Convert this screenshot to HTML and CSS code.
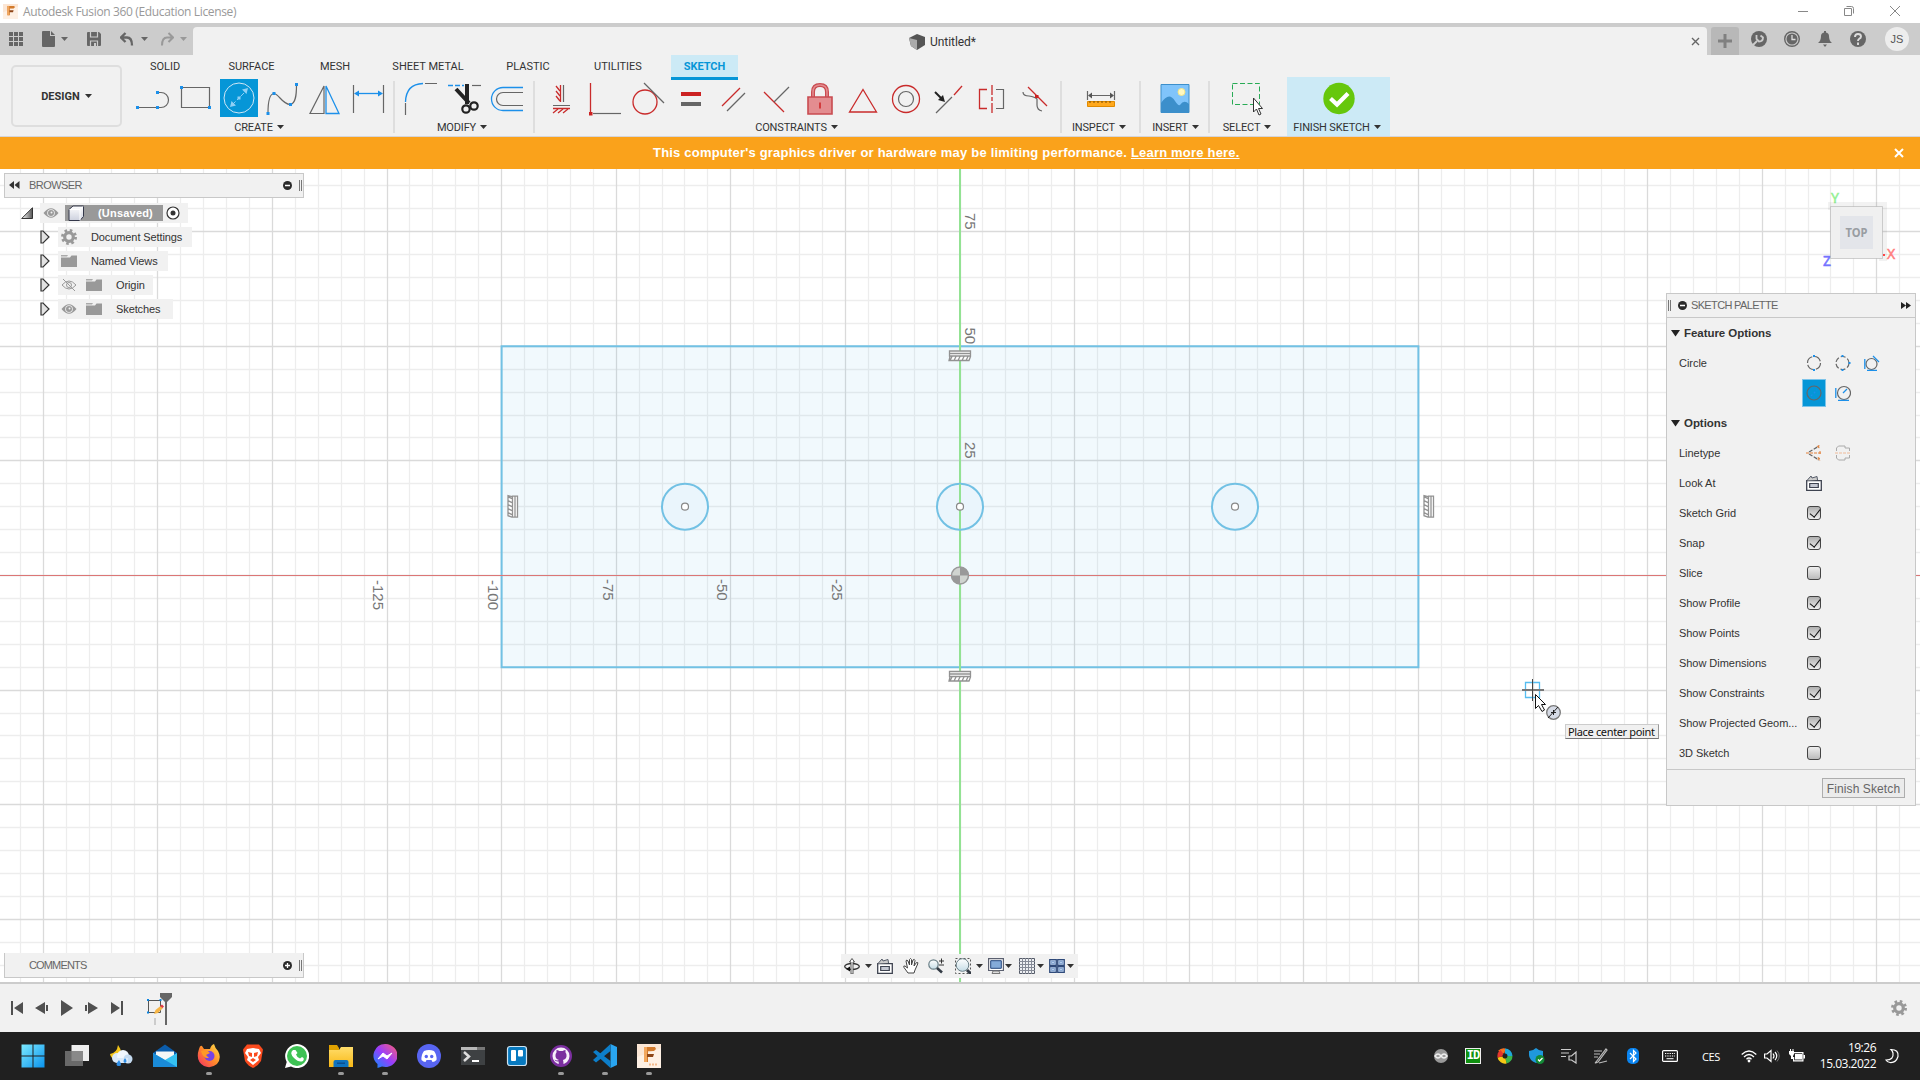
FILE: index.html
```html
<!DOCTYPE html>
<html lang="en">
<head>
<meta charset="utf-8">
<title>Autodesk Fusion 360</title>
<link rel="stylesheet" href="styles.css">
</head>
<body>
<svg width="0" height="0" class="defs">
  <defs>
    <linearGradient id="boxg" x1="0" y1="0" x2="0" y2="1"><stop offset="0" stop-color="#fff"/><stop offset="1" stop-color="#cdd1de"/></linearGradient>
    <linearGradient id="tri" x1="0" y1="0" x2="1" y2="0"><stop offset="0" stop-color="#fff"/><stop offset="1" stop-color="#555"/></linearGradient>
    <linearGradient id="win" x1="0" y1="0" x2="1" y2="1"><stop offset="0" stop-color="#7ceaff"/><stop offset="1" stop-color="#0a93ee"/></linearGradient>
    <linearGradient id="fold" x1="0" y1="0" x2="0" y2="1"><stop offset="0" stop-color="#ffdd6b"/><stop offset="1" stop-color="#f9b916"/></linearGradient>
    <linearGradient id="mess" x1="0" y1="1" x2="1" y2="0"><stop offset="0" stop-color="#0a8dff"/><stop offset=".5" stop-color="#9a3dfc"/><stop offset="1" stop-color="#ff6070"/></linearGradient>
    <linearGradient id="ff" x1="1" y1="0" x2="0" y2="1"><stop offset="0" stop-color="#ffe34a"/><stop offset=".5" stop-color="#ff8a2a"/><stop offset="1" stop-color="#f5286a"/></linearGradient>
    <linearGradient id="glass" x1="0" y1="0" x2="0" y2="1"><stop offset="0" stop-color="#fff"/><stop offset="1" stop-color="#c5dce6"/></linearGradient>
    <symbol id="eye" viewBox="0 0 16 12"><path d="M.5 6Q8-3.5 15.500 6 8 15.500.5 6z" fill="#999"/><circle cx="8" cy="6" r="3.800" fill="#f1f1f1"/><circle cx="8" cy="6" r="3" fill="#999"/><circle cx="8.500" cy="5.500" r="1" fill="#f1f1f1"/></symbol>
    <symbol id="folder" viewBox="0 0 16 14"><path d="M0 3.500h9l1.500-2H16V13H0z" fill="#999"/><path d="M0 1h7L6 2.500H0z" fill="#aaa"/></symbol>
    <symbol id="exp" viewBox="0 0 10 14"><path d="M1 1h2l6 6-6 6H1z" fill="#e2e2e2" stroke="#333" stroke-width="1.200"/></symbol>
    <symbol id="gear" viewBox="0 0 16 16"><circle cx="8" cy="8" r="6.500" fill="none" stroke="#999" stroke-width="3" stroke-dasharray="2.500 2.600"/><circle cx="8" cy="8" r="4.300" fill="none" stroke="#999" stroke-width="3.200"/></symbol>
    <symbol id="lookat" viewBox="0 0 16 16"><path d="M.7 5.700h14.600v9.600H.7z" fill="#fff" stroke="#3e4350" stroke-width="1.300"/><path d="M3.700 8.500h8.600v4H3.700z" fill="#c4c8d2" stroke="#3e4350" stroke-width="1.200"/><path d="M1 5.500 5 1l1 2 5-1.500.500 3.500" fill="#ccc" stroke="#555b68"/></symbol>
    <symbol id="f" viewBox="0 0 24 24"><path d="M0 0h24v24H0z" fill="#fbe6d5"/><path d="M0 13 24 4v20H0z" fill="#fff3ea" opacity=".7"/><path d="M7 3h11l1 2-2 2-6 .3V18H7z" fill="#d27a2c"/><path d="M10 10h7l-1 3h-6z" fill="#8e4517"/><path d="M7 3h3v15H7z" fill="#f3a75d"/></symbol>
    <symbol id="caret" viewBox="0 0 7 4"><path d="M0 0h7L3.500 4z" fill="currentColor"/></symbol>
  </defs>
</svg>

<header class="titlebar">
  <svg width="15" height="15"><use href="#f"/></svg>
  <span class="title">Autodesk Fusion 360 (Education License)</span>
  <div class="winbtns">
    <svg viewBox="0 0 12 12"><path d="M1 6.500h10"/></svg>
    <svg viewBox="0 0 12 12"><path d="M1.500 3.500h7v7h-7zM3.500 1.500h5q2 0 2 2v5"/></svg>
    <svg viewBox="0 0 12 12"><path d="m1 1 10 10M11 1 1 11"/></svg>
  </div>
</header>

<div class="topbar">
  <div class="quick">
    <svg class="q-grid" width="14" height="14"><path d="M0 0h4v4H0zM5 0h4v4H5zM10 0h4v4h-4zM0 5h4v4H0zM5 5h4v4H5zM10 5h4v4h-4zM0 10h4v4H0zM5 10h4v4H5zM10 10h4v4h-4z" fill="#666"/></svg>
    <svg class="q-file" width="14" height="16"><path d="M0 1q0-1 1-1h7v5h5v10q0 1-1 1H1q-1 0-1-1zM9 0l4 4H9z" fill="#666"/></svg>
    <svg class="car q-c1"><use href="#caret"/></svg>
    <svg class="q-save" width="14" height="14"><path d="M1 0h11l2 2v11q0 1-1 1H1q-1 0-1-1V1q0-1 1-1z" fill="#666"/><path d="M3.500 0v5h7V0M3.500 14V9h7v5" fill="none" stroke="#ccc" stroke-width="1.200"/><path d="M7 11h2v3H7z" fill="#ccc"/></svg>
    <svg class="q-undo" width="14" height="14"><path d="M5.500 1 1 5.500 5.500 10M1.500 5.500H7q5 0 5 8" fill="none" stroke="#666" stroke-width="2.300"/></svg>
    <svg class="car q-c2"><use href="#caret"/></svg>
    <svg class="q-redo" width="14" height="14"><path d="M8.500 1 13 5.500 8.500 10M12.500 5.500H7q-5 0-5 8" fill="none" stroke="#999" stroke-width="2"/></svg>
    <svg class="car q-c3"><use href="#caret"/></svg>
  </div>
  <div class="doctab">
    <span class="docname"><svg width="16" height="16"><path d="M0 4 8 0l8 3v8l-8 5-6-4z" fill="#555"/><path d="m0 4 8 2v10l-6-4z" fill="#aaa"/></svg>Untitled*</span>
    <svg class="close" width="9" height="9"><path d="m1 1 7 7M8 1 1 8" stroke="#666" stroke-width="1.400"/></svg>
  </div>
  <div class="plus"><svg width="14" height="14"><path d="M5.500 0h3v5.500H14v3H8.500V14h-3V8.500H0v-3h5.500z" fill="#808080"/></svg></div>
  <div class="account">
    <svg width="18" height="18"><circle cx="9" cy="9" r="8" fill="#666"/><path d="m2 16 5-5M6.500 5v4l2.500 2.500q4 0 4-4L10.500 5.500" stroke="#ccc" stroke-width="1.800" fill="none"/></svg>
    <svg width="18" height="18"><circle cx="9" cy="9" r="7.300" fill="none" stroke="#666" stroke-width="1.400"/><circle cx="9" cy="9" r="5.500" fill="#666"/><path d="M9 5v4.500h3.500" stroke="#ddd" stroke-width="1.300" fill="none"/></svg>
    <svg width="18" height="18"><path d="M2 13q3-2 3-7 0-3 3-3.500V1h2v1.500q3 .500 3 3.500 0 5 3 7zM7 14.500h4L9 17z" fill="#666"/></svg>
    <svg width="18" height="18"><circle cx="9" cy="9" r="8" fill="#666"/><path d="M6 7q0-3 3-3t3 2.500q0 1.500-2 2.500-1 .6-1 2M9 12.500V15" stroke="#ddd" stroke-width="1.900" fill="none"/></svg>
    <span class="avatar">JS</span>
  </div>
</div>

<section class="ribbon">
  <div class="designcol"><div class="design">DESIGN <svg class="car"><use href="#caret"/></svg></div></div>
  <div class="rightcol">
    <nav class="tabs">
      <span class="t1">SOLID</span><span class="t2">SURFACE</span><span class="t3">MESH</span><span class="t4">SHEET METAL</span><span class="t5">PLASTIC</span><span class="t6">UTILITIES</span><span class="t7 active">SKETCH</span>
    </nav>
    <div class="groups">
      <div class="group g6">
        <div class="icons">
          <svg viewBox="0 0 36 36"><path d="M3 27.500h20M23 12.500h3a7.500 7.500 0 0 1 0 15h-3" class="k"/><path d="M1 26h3v3H1zM21 26h3v3h-3zM21 11h3v3h-3z" class="bf"/></svg>
          <svg viewBox="0 0 36 36"><path d="M3.500 7.500h28v20h-28z" class="k"/><path d="M2 6h3v3H2zM30 26h3v3h-3z" class="bf"/></svg>
          <svg class="on" viewBox="0 0 38 38"><circle cx="19" cy="19" r="15" fill="none" stroke="#cfe6f5"/><path d="m12 26 14-14" stroke="#8fd0f5" stroke-dasharray="5 2 3 2 5"/><path d="m28 9-1.500 6L22 10.500zM10 28l1.500-6 4.500 4.500zM17.500 17.500h3v3h-3z" fill="#8fd0f5"/></svg>
          <svg viewBox="0 0 36 36"><path d="M4 33Q4 14 10 13.500C15 14 18 24 26 24.500 32 24 32.500 14 32.500 5" class="k"/><path d="M2.500 32h3v3h-3zM8.500 12h3v3h-3zM25 23h3v3h-3zM31 3h3v3h-3z" class="bf"/></svg>
          <svg viewBox="0 0 36 36"><path d="M17 6v27.500H3z" class="k"/><path d="M19 6v27.500h13z" class="b"/></svg>
          <svg viewBox="0 0 36 36"><path d="M3.500 5v28M33.500 5v28" class="k"/><path d="M6 13.500h25" class="b"/><path d="m4 13.500 5-3v6zM33 13.500l-5-3v6z" class="bf"/></svg>
        </div>
        <div class="glabel">CREATE <svg class="car"><use href="#caret"/></svg></div>
      </div>
      <div class="group g3">
        <div class="icons">
          <svg viewBox="0 0 36 36"><path d="M2.500 35V23M22 3.500h12" class="k"/><path d="M2.500 22Q3 4 20 3.500" class="b"/></svg>
          <svg viewBox="0 0 36 36"><path d="M2 5.500h16" class="b" stroke-dasharray="5 2"/><path d="M26 5.500h9" class="k"/><path d="m10 9 13 14M21 4v20" stroke="#222" stroke-width="4"/><circle cx="20" cy="29" r="3.700" class="s"/><circle cx="28" cy="26" r="3.700" class="s"/></svg>
          <svg viewBox="0 0 36 36"><path d="M34 7.500H14a11.500 11.500 0 0 0 0 23h20" class="b"/><path d="M34 12.500H14a6.500 6.500 0 0 0 0 13h20" class="k"/></svg>
        </div>
        <div class="glabel">MODIFY <svg class="car"><use href="#caret"/></svg></div>
      </div>
      <div class="group g12">
        <div class="icons">
          <svg viewBox="0 0 36 36"><path d="M16.500 5v17M9 28.500h17" class="r"/><path d="M19.500 5v17M9 25.500h17" class="k"/><path d="m12 6 4 5m-4 0 4 5m-4 0 4 5M14 29l-5 4m10-4-5 4m10-4-5 4" class="r"/></svg>
          <svg viewBox="0 0 36 36"><path d="M3.500 3v29" class="r"/><path d="M2 32h3.500v3.500H2z" fill="#c22"/><path d="M6 33.500h28" class="k"/></svg>
          <svg viewBox="0 0 36 36"><circle cx="15" cy="22" r="12" class="r"/><path d="m14 3 20 20" class="k"/></svg>
          <svg viewBox="0 0 36 36"><path d="M8 12h20v4H8z" fill="#c22"/><path d="M8 22h20v4H8z" fill="#666"/></svg>
          <svg viewBox="0 0 36 36"><path d="M6 26 24 8" class="r"/><path d="m11 31 18-18" class="k"/></svg>
          <svg viewBox="0 0 36 36"><path d="m5 12 20 20" class="r"/><path d="m15 22 15-15" class="k"/></svg>
          <svg viewBox="0 0 36 36"><path d="M11 17v-5q0-7 7-7t7 7v5" fill="none" stroke="#c94b50" stroke-width="4"/><path d="M11 17v-5q0-7 7-7t7 7v5" fill="none" stroke="#e38d90" stroke-width="1.500"/><path d="M6 17h24v17H6z" fill="#e38d90" stroke="#c94b50" stroke-width="1.600"/><path d="M18 22.500v6" stroke="#c22" stroke-width="1.500"/></svg>
          <svg viewBox="0 0 36 36"><path d="M18 9.500 31.500 32h-27z" class="r"/></svg>
          <svg viewBox="0 0 36 36"><circle cx="18" cy="19" r="13.500" class="r"/><circle cx="18" cy="19" r="7.500" class="k"/></svg>
          <svg viewBox="0 0 36 36"><path d="m5 33 16-16" class="k"/><path d="m23 15 8-9" class="r"/><path d="m4 12 6 6" stroke="#222" stroke-width="2"/><path d="m14 22-7-2 5-5z" fill="#222"/></svg>
          <svg viewBox="0 0 36 36"><path d="M13 9.500H5.500v19H13M18 5v10m0 2v4m0 2v10" class="r"/><path d="M22 9.500h7.500v19H22" class="k"/></svg>
          <svg viewBox="0 0 36 36"><path d="m11 7 19 19" class="r"/><path d="M6 12q0 4 6 4 6 1 8 3v6q0 5 5 6" class="k"/><path d="M18 15h3.500v3H18z" fill="#c22"/></svg>
        </div>
        <div class="glabel">CONSTRAINTS <svg class="car"><use href="#caret"/></svg></div>
      </div>
      <div class="group gi">
        <div class="icons"><svg viewBox="0 0 36 36"><path d="M4.500 11v9M31.500 11v9M6 15.500h24" class="k"/><path d="m5 15.500 4-3v6zM31 15.500l-4-3v6z" fill="#555"/><path d="M4.500 21.500h27v5h-27z" fill="#ffa81c" stroke="#e08a00"/><path d="M7 21v2m4-2v2m4-2v2m4-2v2m4-2v2m4-2v2" stroke="#7a4d00"/></svg></div>
        <div class="glabel">INSPECT <svg class="car"><use href="#caret"/></svg></div>
      </div>
      <div class="group gn">
        <div class="icons"><svg viewBox="0 0 36 36"><path d="M4 4.500h28v28H4z" fill="#80c4fb" stroke="#3c8fcb"/><path d="M4 23q8-12 14-2 3 5 5 4 4-6 9-1v9H4z" fill="#3c8fcb"/><circle cx="24.500" cy="12" r="3.500" fill="#fff8c0" stroke="#f4e588"/></svg></div>
        <div class="glabel">INSERT <svg class="car"><use href="#caret"/></svg></div>
      </div>
      <div class="group gs">
        <div class="icons"><svg viewBox="0 0 36 36"><path d="M3.500 3.500h27v21h-27z" fill="none" stroke="#28ab55" stroke-dasharray="5 2.500"/><path d="M24.500 18v14l3-3 2.500 6 2-1-2.500-5.500h4z" fill="#fff" stroke="#333"/></svg></div>
        <div class="glabel">SELECT <svg class="car"><use href="#caret"/></svg></div>
      </div>
      <div class="group gf">
        <div class="icons"><svg viewBox="0 0 36 36"><circle cx="18" cy="18.500" r="15.700" fill="#66c70c"/><path d="m9.500 18.500 6.500 6L27 13.500" fill="none" stroke="#fff" stroke-width="4.200"/></svg></div>
        <div class="glabel">FINISH SKETCH <svg class="car"><use href="#caret"/></svg></div>
      </div>
    </div>
  </div>
</section>

<div class="banner">
  <span>This computer's graphics driver or hardware may be limiting performance. <u>Learn more here.</u></span>
  <svg class="bclose" width="10" height="10"><path d="m1 1 8 8M9 1 1 9" stroke="#fff" stroke-width="2"/></svg>
</div>

<main class="canvas">
  <svg class="drawing" viewBox="0 169 1920 813">
    <g id="grid"></g>
    <path d="M501.600 346.300h916.800v320.900H501.600z" fill="#3ea9ea" fill-opacity=".075" stroke="#72c1e4" stroke-width="2"/>
    <path d="M0 575.500h1920" stroke="#dc7676"/>
    <path d="M960 169v813" stroke="#93e293" stroke-width="2"/>
    <g fill="#eaf5fc" stroke="#72c1e4" stroke-width="2"><circle cx="685" cy="506.700" r="23"/><circle cx="960" cy="506.700" r="23"/><circle cx="1235" cy="506.700" r="23"/></g>
    <path d="M960 484v45" stroke="#93e293" stroke-width="2"/>
    <g fill="#fff" stroke="#888" stroke-width="1.200"><circle cx="685" cy="506.700" r="3.500"/><circle cx="960" cy="506.700" r="3.500"/><circle cx="1235" cy="506.700" r="3.500"/></g>
    <g><circle cx="960" cy="575.500" r="8.500" fill="#d0d4d0" stroke="#999" stroke-width="1.500"/><path d="M960 575.500v-8.500a8.500 8.500 0 0 1 8.500 8.500zM960 575.500v8.500a8.500 8.500 0 0 1-8.500-8.500z" fill="#999"/></g>
    <g class="axis">
      <text transform="translate(965 213)rotate(90)">75</text><text transform="translate(965 327.500)rotate(90)">50</text><text transform="translate(965 442)rotate(90)">25</text>
      <text transform="translate(373 580)rotate(90)">-125</text><text transform="translate(488 580)rotate(90)">-100</text><text transform="translate(603 579)rotate(90)">-75</text><text transform="translate(717 579)rotate(90)">-50</text><text transform="translate(832 579)rotate(90)">-25</text>
    </g>
    <g>
      <g id="hm" transform="translate(960 355.500)"><path d="M-10.500-4.500h21v5h-21zM-10.500-2h21M-10 1-11 5h20l1.500-4M-8 1l-2 4m6-4-2 4m6-4-2 4m6-4L2 5m6-4L6 5" fill="#fff" stroke="#929292" stroke-width="1.300"/></g>
      <use href="#hm" y="320.500"/>
      <g transform="translate(1429 506.700)"><path id="vm" d="M4.500-10.500v21h-5v-21zM2-10.500v21M-1-10l-4-1v20l4 1.500M-1-8l-4-2m4 6-4-2m4 6-4-2m4 6-4-2m4 6-4-2" fill="#fff" stroke="#929292" stroke-width="1.300"/></g>
      <use href="#vm" x="513" y="506.700"/>
    </g>
    <g><path d="M1525.500 682.500h14v15h-14z" fill="none" stroke="#56bdf0" stroke-width="1.300"/><path d="M1522 690h22" stroke="#777" stroke-width="2"/><path d="M1532.500 679v22" stroke="#444"/><path d="M1535.500 694.500v14l3-3 3.500 6 2.500-1.500-3-5.500h4z" fill="#fff" stroke="#111"/><circle cx="1553.500" cy="712.500" r="6.800" fill="#d5dae5" stroke="#777" stroke-width="1.300"/><path d="m1548 718 10-11M1553.500 710v5m-2.500-2.500h5" stroke="#222"/></g>
    <g class="cube"><text x="1831" y="203" fill="#93f093" stroke="#93f093">Y</text><text x="1823" y="266" fill="#7474ff" stroke="#7474ff">Z</text><text x="1887" y="259" fill="#ff8080" stroke="#ff8080">X</text>
      <path d="M1828 206h55v55" fill="none" stroke="#000" stroke-opacity=".05" stroke-width="8"/><path d="M1830.500 206.500h52v52h-52z" fill="#f0f0f0" stroke="#a5a5a5"/><path d="M1883 254h2v2h-2z" fill="#f44"/><path d="M1840 216h33v33h-33z" fill="#e3e5ea"/><text x="1845.500" y="237" class="top" textLength="22" lengthAdjust="spacingAndGlyphs">TOP</text></g>
  </svg>
  <div class="tip">Place center point</div>

  <div class="panel browser">
    <svg width="11" height="8"><path d="M0 4 5 0v8zM5.500 4l5-4v8z" fill="#333"/></svg><span>BROWSER</span>
    <svg class="pm" width="9" height="9"><circle cx="4.500" cy="4.500" r="4.500" fill="#2b2b2b"/><path d="M2 4.500h5" stroke="#fff" stroke-width="1.500"/></svg><i class="grip"></i>
  </div>
  <div class="tree">
    <div class="row r0"><svg width="12" height="12"><path d="M.7 11.500 11.500.7v10.800z" fill="url(#tri)" stroke="#333"/></svg>
      <div class="chip"><svg width="16" height="12"><use href="#eye"/></svg><b class="unsaved"><svg width="17" height="17"><path d="M1 4.500 5 1h10.500v10.500L12 15.500H1z" fill="url(#boxg)" stroke="#34384a"/><path d="M1.500 4.500H12v11M12 4.500l3-3" fill="none" stroke="#fff"/></svg>(Unsaved)</b>
      <svg width="14" height="14"><circle cx="7" cy="7" r="6" fill="#fff" stroke="#333" stroke-width="1.200"/><circle cx="7" cy="7" r="2.500" fill="#333"/></svg></div></div>
    <div class="row"><svg width="10" height="14"><use href="#exp"/></svg><div class="chip w1"><svg width="16" height="16"><use href="#gear"/></svg><span>Document Settings</span></div></div>
    <div class="row"><svg width="10" height="14"><use href="#exp"/></svg><div class="chip w2"><svg width="16" height="14"><use href="#folder"/></svg><span>Named Views</span></div></div>
    <div class="row"><svg width="10" height="14"><use href="#exp"/></svg><div class="chip w3"><svg width="16" height="12"><path d="M1 6q7-8 14 0-7 8-14 0zM2 0l12 12" fill="none" stroke="#999"/><circle cx="8" cy="6" r="2.500" fill="none" stroke="#999"/></svg><svg class="f2" width="16" height="14"><use href="#folder"/></svg><span>Origin</span></div></div>
    <div class="row"><svg width="10" height="14"><use href="#exp"/></svg><div class="chip w4"><svg width="16" height="12"><use href="#eye"/></svg><svg class="f2" width="16" height="14"><use href="#folder"/></svg><span>Sketches</span></div></div>
  </div>

  <aside class="palette">
    <div class="phead"><i class="grip"></i><svg width="9" height="9"><circle cx="4.500" cy="4.500" r="4.500" fill="#2b2b2b"/><path d="M2 4.500h5" stroke="#fff" stroke-width="1.500"/></svg><span>SKETCH PALETTE</span><svg class="ff" width="10" height="7"><path d="M0 0v7l5-3.500zM5 0v7l5-3.500z" fill="#222"/></svg></div>
    <div class="prow sec"><svg width="9" height="7"><path d="M0 0h9L4.500 6.500z" fill="#222"/></svg>Feature Options</div>
    <div class="prow"><label>Circle</label><div class="opts">
      <svg viewBox="0 0 16 16"><circle cx="8" cy="8" r="6.500" class="k" stroke-dasharray="8 2"/><path d="M7 0h2v2H7zM7 14h2v2H7z" class="bf"/></svg>
      <svg viewBox="0 0 16 16"><circle cx="7.500" cy="8" r="6.500" class="k" stroke-dasharray="5 2"/><path d="M6.500 0h2v2h-2zM6.500 14h2v2h-2zM13.500 7h2v2h-2z" class="bf"/></svg>
      <svg viewBox="0 0 16 16"><circle cx="7.500" cy="9" r="5.500" class="k"/><path d="M.8 4v10M3 15.500h10M9 1l6 6" class="b"/></svg></div></div>
    <div class="prow"><label></label><div class="opts"><div class="sel"><svg viewBox="0 0 16 16"><circle cx="8" cy="8" r="7" class="k"/><path d="m5 11 6-6" class="b" stroke-dasharray="2"/></svg></div><svg viewBox="0 0 16 16"><circle cx="9" cy="8" r="6.500" class="k"/><path d="M.8 3v10M3 15.300h11M8 8l4-4" class="b"/></svg></div></div>
    <div class="prow sec"><svg width="9" height="7"><path d="M0 0h9L4.500 6.500z" fill="#222"/></svg>Options</div>
    <div class="prow"><label>Linetype</label><div class="opts"><svg viewBox="0 0 16 16"><path d="m3 7 10-6M3 9l10 6" class="k" stroke-dasharray="4 1.500"/><path d="M0 8h15M11 1l3 2M13 0l-1 4M12 12l2 4M14 13l-3 2M14 6v4" stroke="#e2803a" stroke-dasharray="3 1"/></svg><svg viewBox="0 0 16 16"><path d="M1.500 6V3l2-2H10v2h4.500v3M1.500 10v3l2 2H10v-2h4.500v-3" fill="none" stroke="#aaa"/><path d="M0 8h16" stroke="#f0bb99" stroke-dasharray="3 1"/></svg></div></div>
    <div class="prow"><label>Look At</label><div class="opts"><svg><use href="#lookat"/></svg></div></div>
    <div class="prow"><label>Sketch Grid</label><i class="cb on"></i></div>
    <div class="prow"><label>Snap</label><i class="cb on"></i></div>
    <div class="prow"><label>Slice</label><i class="cb"></i></div>
    <div class="prow"><label>Show Profile</label><i class="cb on"></i></div>
    <div class="prow"><label>Show Points</label><i class="cb on"></i></div>
    <div class="prow"><label>Show Dimensions</label><i class="cb on"></i></div>
    <div class="prow"><label>Show Constraints</label><i class="cb on"></i></div>
    <div class="prow"><label>Show Projected Geom...</label><i class="cb on"></i></div>
    <div class="prow"><label>3D Sketch</label><i class="cb"></i></div>
    <div class="pfoot"><button>Finish Sketch</button></div>
  </aside>

  <div class="navbar">
    <svg class="n" viewBox="0 0 16 16"><ellipse cx="8" cy="8.500" rx="7.300" ry="3" fill="none" stroke="#333" stroke-width="1.300"/><path d="M7 16V4H5.500L8 .5 10.500 4H9v12z" fill="#fff" stroke="#444" stroke-width=".9"/><path d="m2 11 4-2.500v5z" fill="#111"/></svg><svg class="car c1"><use href="#caret"/></svg>
    <svg class="n n2"><use href="#lookat"/></svg>
    <svg class="n n3" viewBox="0 0 16 16"><path d="M5 15 1 9.500q-1-2 1-1.500l2.500 2L3 3q.500-2 2 0l1.500 4V1.500q1-2 2 0V7L10 2q1.500-1.500 2 .5L11 8l2.500-3.500q2-.5 1.200 1.500L12 12l-1 3z" fill="#fff" stroke="#444"/></svg>
    <svg class="n n4" viewBox="0 0 16 16"><circle cx="5.500" cy="6.500" r="4.700" fill="url(#glass)" stroke="#6b8088" stroke-width="1.200"/><path d="m9 10 5 4.500" stroke="#333b45" stroke-width="2.600"/><path d="M11 3h5M13.500.500v5M11 7h5" stroke="#333"/></svg>
    <svg class="n n5" viewBox="0 0 16 16"><path d="M.5.500h15v15H.5z" fill="none" stroke="#555" stroke-dasharray="2"/><circle cx="7.500" cy="7" r="6.300" fill="url(#glass)" stroke="#6b8088"/><path d="m12 12 4 4" stroke="#333b45" stroke-width="3"/></svg><svg class="car c2"><use href="#caret"/></svg>
    <svg class="n n6" viewBox="0 0 16 16"><path d="M.6.600h14.800v11.900H.6z" fill="#fff" stroke="#5b6070" stroke-width="1.200"/><path d="M2.700 2.700h10.600v7.600H2.700z" fill="#84abd9" stroke="#25487e"/><path d="M5 13h6l1 2.500H4z" fill="#ddd" stroke="#777"/></svg><svg class="car c3"><use href="#caret"/></svg>
    <svg class="n n7" viewBox="0 0 16 16"><path d="M.5.500h15v15H.5z" fill="#eef0f3" stroke="#555b68"/><path d="M3.500 0v16M6.500 0v16M9.500 0v16M12.500 0v16M0 3.500h16M0 6.500h16M0 9.500h16M0 12.500h16" stroke="#858a96"/></svg><svg class="car c4"><use href="#caret"/></svg>
    <svg class="n n8" viewBox="0 0 16 16"><path d="M.7 1.700h6.600v5.600H.7zM8.700 1.700h6.600v5.600H8.700zM.7 8.700h6.600v5.600H.7zM8.700 8.700h6.600v5.600H8.700z" fill="#b6cdeb" stroke="#2f4a7a" stroke-width="1.200"/><path d="M2.500 3.500h3v2h-3zM10.500 3.500h3v2h-3zM2.500 10.500h3v2h-3zM10.500 10.500h3v2h-3z" fill="none" stroke="#7b9dcc" stroke-width=".8"/></svg><svg class="car c5"><use href="#caret"/></svg>
  </div>
  <div class="panel comments"><span>COMMENTS</span><svg class="pm" width="9" height="9"><circle cx="4.500" cy="4.500" r="4.500" fill="#2b2b2b"/><path d="M2 4.500h5M4.500 2v5" stroke="#fff" stroke-width="1.300"/></svg><i class="grip"></i></div>
</main>

<section class="timeline">
  <svg class="play" width="112" height="16" fill="#505050"><path d="M0 1h2v14H0zM12 2v12L3 8zM24 8l10-6v12zM35 5h2v6h-2zM50 0v16l12-8zM74 5h2v6h-2zM77 2v12l10-6zM100 2v12l9-6zM110 1h2v14h-2z"/></svg>
  <svg class="feature" width="28" height="34"><path d="M2.500 8.500h12v12h-12z" fill="none" stroke="#555"/><path d="M1 7h2v2H1zM13.500 7h2v2h-2zM1 19.500h2v2H1z" fill="#0a84e0"/><path d="m8 22 1.500-4 5-4 2.500 2-5 5z" fill="#f6b545"/><path d="m14 14 2-1.500 2 2-1.500 1.500z" fill="#e53946"/><path d="M8 26h2v7H8z" fill="#ccc"/><path d="M14 1h12v4l-5 5v23h-2V10l-5-5z" fill="#666"/></svg>
  <svg class="tgear" width="16" height="16"><use href="#gear"/></svg>
</section>

<footer class="taskbar">
  <div class="apps">
    <span><svg viewBox="0 0 24 24"><path d="M.5.500h11v11H.5zM12.500.500h11v11h-11zM.5 12.500h11v11H.5zM12.500 12.500h11v11h-11z" fill="url(#win)"/></svg></span>
    <span><svg viewBox="0 0 24 24"><path d="M6.500 1H24v16H6.500z" fill="#eee"/><path d="M0 7h18v15H0z" fill="#777" fill-opacity=".85"/></svg></span>
    <span><svg viewBox="0 0 24 24"><path d="M9 1q-1 8-8 9 1 6 8 4 6-5 0-13z" fill="#f5c518"/><circle cx="8" cy="14" r="5" fill="#dbe9f7"/><circle cx="14" cy="12" r="6" fill="#f0f6fc"/><circle cx="19" cy="15" r="4.500" fill="#c5dbf0"/><path d="M8 14h11v5H8z" fill="#dbe9f7"/><path d="M10 16q-5 6 0 6 4 0 0-6zM16 14q-3 4 0 5 3-1 0-5z" fill="#2f8ee5"/></svg></span>
    <span><svg viewBox="0 0 24 24"><path d="M0 9 12 .500 24 9v4H0z" fill="#0b5cab"/><path d="M3 7.500h18v9H3z" fill="#f6f6f6"/><path d="M0 9l12 7 12-7v14H0z" fill="#35c1f1"/><path d="M0 9v14h24z" fill="#1a8bd8"/></svg></span>
    <span class="run"><svg viewBox="0 0 24 24"><path d="M2 5q1-4 3-3l2 3 6 0q1-4 4-5 1 4 4 7 4 7-1 13-6 5-13 2Q-2 17 2 5z" fill="url(#ff)"/><circle cx="12.500" cy="12" r="5" fill="#7542e5"/><path d="M4 7q6-2 9 2l-4 2 3 3q-6 1-8-7z" fill="#ff9a26"/></svg></span>
    <span><svg viewBox="0 0 24 24"><path d="M6 .500h12l4 5-2 11.500q-3 5-8 7-5-2-8-7L2 5.500z" fill="#fb4b1e"/><path d="m6 5 6-1 6 1 2 4-3 4 1 3-6 5-6-5 1-3-3-4z" fill="#fff"/><path d="m7 8 4 1v4l-3-1zM17 8l-4 1v4l3-1zM9 16l3-2 3 2-3 2z" fill="#fb4b1e"/></svg></span>
    <span><svg viewBox="0 0 24 24"><path d="m0 24 1.700-6A12 12 0 1 1 6 22.400z" fill="#fff"/><circle cx="12" cy="12" r="10" fill="#3ec254"/><path d="M8 6q-4 3 1 8t9 3q2-3-1-4l-2 1.500q-3-1-4-4L12.500 9 10.500 6z" fill="#fff"/></svg></span>
    <span class="run"><svg viewBox="0 0 24 24"><path d="M0 1h8l2 3v4H0z" fill="#e0a100"/><path d="M0 6h10l2-3h12v20H0z" fill="url(#fold)"/><path d="M4.500 23v-5q0-2 2-2h11q2 0 2 2v5z" fill="#0f73c0"/><path d="M8 18.500h8v1.500H8z" fill="#0b4f91"/></svg></span>
    <span class="run"><svg viewBox="0 0 24 24"><path d="M12 0a12 11.500 0 1 1-3 22.500L4.500 24v-4A12 11.500 0 0 1 12 0z" fill="url(#mess)"/><path d="m5 15 5-6 4 3 5-3-5 6-4-3z" fill="#fff" stroke="#fff"/></svg></span>
    <span><svg viewBox="0 0 24 24"><circle cx="12" cy="12" r="12" fill="#5865f2"/><path d="M7 7q5-2 10 0 3 4 2.500 9-2 2-4 2l-1-2h-5l-1 2q-2 0-4-2Q4 11 7 7z" fill="#fff"/><circle cx="9.300" cy="12.500" r="1.700" fill="#5865f2"/><circle cx="14.700" cy="12.500" r="1.700" fill="#5865f2"/></svg></span>
    <span><svg viewBox="0 0 24 24"><path d="M0 3h24v18H0z" fill="#3e4143"/><path d="M0 3h16v3H0z" fill="#b8b8b8"/><path d="M16 3h8v3h-8z" fill="#777"/><path d="m3 8 5 4.500L3 17" fill="none" stroke="#ddd" stroke-width="2.500"/><path d="M11 17h7" stroke="#fff" stroke-width="2"/></svg></span>
    <span><svg viewBox="0 0 24 24"><rect x="2.500" y="2.500" width="19" height="19" rx="2.500" fill="#0779bf" stroke="#cfe4f2" stroke-width="1.200"/><rect x="6" y="6" width="5" height="11" rx="1" fill="#fff"/><rect x="13" y="6" width="5" height="6.500" rx="1" fill="#fff"/></svg></span>
    <span class="run"><svg viewBox="0 0 24 24"><circle cx="12" cy="12" r="11" fill="#7b2f9f"/><circle cx="12" cy="12" r="8.500" fill="#f7f0fa"/><path d="M9.700 21v-3.500q-3.700.5-4.200-2 2.500 1.500 4.500.5-4-1-3.500-5 0-1.500 1-2.500V6q1.500 0 2.800 1h3.400q1.300-1 2.800-1v2.500q1 1 1 2.500.5 4-3.500 5 .5 1 .5 5z" fill="#7b2f9f"/></svg></span>
    <span class="run"><svg viewBox="0 0 24 24"><path d="M17.500 0 24 3v18l-6.500 3z" fill="#29a5f0"/><path d="M17.500 0v7L3 18.500 0 16zM0 8l3-2 14.500 11v7z" fill="#0d7ec9"/></svg></span>
    <span class="run"><svg viewBox="0 0 24 24"><use href="#f"/><path d="M12 20.500h8" stroke="#f3b98c" stroke-width="2" stroke-dasharray="2 1"/></svg></span>
  </div>
  <div class="tray">
    <svg viewBox="0 0 16 16"><circle cx="8" cy="8" r="7" fill="#999"/><path d="M2 8q3-4 6 0t6 0q-3-4-6 0T2 8z" fill="none" stroke="#eee" stroke-width="1.400"/></svg>
    <div class="idbox">ID</div>
    <svg viewBox="0 0 16 16"><g fill="none" stroke-width="5"><path d="M3 4.500A5 5 0 0 1 8 3" stroke="#f36f21"/><path d="M8 3a5 5 0 0 1 5 5" stroke="#20a8d8"/><path d="M13 8a5 5 0 0 1-4 5" stroke="#3ab54a"/><path d="M9 13a5 5 0 0 1-6-4" stroke="#f6c915"/><path d="M3 9q-.6-3 2-5" stroke="#e5352c"/></g></svg>
    <svg viewBox="0 0 16 16"><path d="M0 3q4 0 7-3 3 3 7 3v5q-1 4-7 7-7-3-7-8z" fill="#1f98dd"/><circle cx="11" cy="11.500" r="4.500" fill="#138a36"/><path d="m9 11.500 1.500 1.500 3-3" fill="none" stroke="#fff" stroke-width="1.300"/></svg>
    <svg viewBox="0 0 16 16"><path d="M0 1.500h10M0 5h8M0 8.500h5M8 8h2.500L15 4v11l-4.500-3H8z" fill="none" stroke="#ccc" stroke-width="1.200"/></svg>
    <svg viewBox="0 0 16 16"><path d="M1 3h8M1 6h6M1 9h4M3 14 13 1l1 1L5 14q-4 2-2 0zM6 15l8-2" fill="none" stroke="#bbb" stroke-width="1.200"/></svg>
    <svg viewBox="0 0 16 16"><rect x="2" width="12" height="16" rx="5" fill="#0a84f0"/><path d="m5 5 6 6-2.500 2.500v-11L11 5l-6 6" fill="none" stroke="#fff" stroke-width="1.200"/></svg>
    <svg class="kb" viewBox="0 0 16 16"><rect x=".6" y="2.600" width="14.800" height="10.800" rx="1" fill="none" stroke="#fff" stroke-width="1.200"/><path d="M3 5.500h10M3 8h10" stroke="#fff" stroke-width="1.200" stroke-dasharray="1.300 1"/><path d="M4.500 10.700h7" stroke="#fff"/></svg>
    <span class="lang">CES</span>
    <svg class="wifi" viewBox="0 0 16 16"><path d="M.7 6.500q7.300-7 14.600 0M3 9q5-5 10 0M5.500 11.300q2.500-2.500 5 0" fill="none" stroke="#fff" stroke-width="1.300"/><circle cx="8" cy="13" r="1.400" fill="#fff"/></svg>
    <svg class="spk" viewBox="0 0 16 16"><path d="M.6 6H3l4-3.500v11L3 10H.6z" fill="none" stroke="#fff" stroke-width="1.200"/><path d="M9 5.500q2 2.500 0 5M11 4q3.500 4 0 8" fill="none" stroke="#fff" stroke-width="1.200"/><path d="M13 2.500q4.500 5.500 0 11" fill="none" stroke="#777"/></svg>
    <svg class="bat" viewBox="0 0 16 16"><path d="M5 4.600h8.900v8.300H4.600V9" fill="none" stroke="#fff" stroke-width="1.200"/><path d="M6 6h7v5.500H6zM14.500 7H16v3.500h-1.500zM0 3h5v3L4 8v3H2V8L0 6zM1 1h1v2H1zM3.500 1h1v2h-1z" fill="#fff"/></svg>
    <div class="clock"><span>19:26</span><span>15.03.2022</span></div>
    <svg class="moon" viewBox="0 0 16 16"><path d="M7 1.500q8 0 7 7-2 6.500-8 6-3-.500-4-2.500 8 0 7-7-.500-2-2-3.500z" fill="none" stroke="#fff" stroke-width="1.200"/></svg>
  </div>
</footer>
<script src="grid.js"></script>
</body>
</html>
```
FILE: styles.css
```css
* { box-sizing: border-box; }
body { margin: 0; width: 1920px; height: 1080px; overflow: hidden; display: flex; flex-direction: column; font: 11px "Liberation Sans", Arial, sans-serif; color: #333; background: #fff; }
svg { display: block; flex: none; }
.defs { position: absolute; }
.car { width: 7px; height: 4px; }
.k { fill: none; stroke: #666; stroke-width: 1.2; }
.b { fill: none; stroke: #1c90ea; stroke-width: 1.3; }
.bf { fill: #1c90ea; }
.r { fill: none; stroke: #c92b2b; stroke-width: 1.3; }
.s { fill: none; stroke: #222; stroke-width: 2.2; }

.titlebar { height: 23px; flex: none; display: flex; align-items: center; padding: 0 0 1px 3px; gap: 5px; color: #999; font: 12px "Open Sans", sans-serif; }
.title { white-space: nowrap; letter-spacing: -.35px; }
.winbtns { margin-left: auto; display: flex; gap: 34px; padding-right: 19px; }
.winbtns svg { width: 12px; height: 12px; fill: none; stroke: #888; }

.topbar { height: 32px; flex: none; background: #ccc; display: flex; }
.quick { width: 193px; display: flex; align-items: center; padding-left: 9px; color: #666; }
.q-file { margin-left: 19px; }
.q-c1 { margin-left: 5px; }
.q-save { margin-left: 19px; }
.q-undo { margin-left: 19px; }
.q-c2 { margin-left: 7px; }
.q-redo { margin-left: 12px; }
.q-c3 { margin-left: 6px; color: #999; }
.doctab { width: 1514px; margin-top: 4px; background: #f1f1f1; border-radius: 4px 4px 0 0; display: flex; align-items: center; padding: 0 7px 0 716px; justify-content: space-between; }
.docname { display: flex; align-items: center; gap: 5px; font: 12px Roboto, sans-serif; padding-top: 1px; letter-spacing: -.05px; }
.plus { width: 28px; margin: 4px 0 0 4px; background: #b8b8b8; display: flex; align-items: center; justify-content: center; border-radius: 3px 3px 0 0; }
.account { display: flex; align-items: center; padding-left: 11px; gap: 15px; }
.avatar { width: 24px; height: 24px; border-radius: 50%; background: #ededed; display: grid; place-items: center; margin-left: 3px; color: #555; font-size: 11px; }

.ribbon { height: 82px; flex: none; background: #f1f1f1; border-bottom: 1px solid #d5d5da; display: flex; font: 11px Roboto, sans-serif; }
.designcol { width: 132px; padding: 10px 0 0 11px; flex: none; }
.design { width: 111px; height: 62px; border: 2px solid #dedede; border-radius: 5px; display: flex; align-items: center; justify-content: center; gap: 5px; font-weight: bold; }
.rightcol { display: flex; flex-direction: column; }
.tabs { display: flex; height: 22px; }
.tabs span { height: 22px; line-height: 23px; text-align: center; flex: none; }
.t1 { width: 66px; }
.t2 { width: 107px; }
.t3 { width: 60px; }
.t4 { width: 126px; }
.t5 { width: 74px; }
.t6 { width: 106px; }
.tabs .t7 { width: 67px; height: 25px; background: #cceaf6; border-bottom: 3px solid #0696d7; color: #0696d7; font-weight: bold; position: relative; }
.groups { display: flex; height: 59px; }
.group { display: flex; flex-direction: column; align-items: center; border-right: 2px solid #dedede; height: 52px; margin-top: 4px; }
.icons { display: flex; flex: none; height: 38px; margin-top: -2px; align-items: center; }
.icons svg { width: 36px; height: 36px; margin: 0 3.5px; }
.icons svg.on { width: 38px; height: 38px; background: #0696d7; margin: 0 2.5px; }
.glabel { display: flex; flex: none; gap: 4px; align-items: center; height: 18px; color: #333; white-space: nowrap; padding-right: 3px; letter-spacing: -.15px; margin-top: 1px; }
.g6 { width: 263px; padding-right: 4px; }
.g3 { width: 140px; padding: 0 5px 0 4px; }
.g12 { width: 527px; padding: 0 4px 0 5px; }
.gi { width: 79px; padding-right: 0; }
.gn { width: 69px; }
.gn .glabel { padding: 0; margin-left: 2px; }
.gs { width: 78px; border-right: 0; padding-right: 4px; }
.gs .glabel { padding: 0; }
.gf { width: 103px; border: 0; background: #cceaf6; margin-top: 0; height: 59px; padding-top: 4px; }
.gs + .gf { margin-left: -1px; }

.banner { height: 32px; flex: none; background: #faa21b; color: #fff; font-weight: bold; font-size: 13px; display: flex; align-items: center; padding: 0 0 1px 653px; }
.banner span { letter-spacing: .2px; white-space: nowrap; }
.bclose { margin-left: auto; margin-right: 16px; }

.canvas { height: 813px; flex: none; position: relative; overflow: hidden; }
.drawing { width: 1920px; height: 813px; }
.axis { font-size: 15px; fill: #777; }
.cube { font: 14px "Noto Sans", sans-serif; stroke-width: .5; }
.cube .top { font-weight: bold; font-size: 12.5px; fill: #999da2; }
.tip { position: absolute; left: 1565px; top: 555px; width: 94px; height: 15px; background: #f0f0f0; border: 1px solid #ccc; border-bottom-color: #777; border-right-color: #999; padding-left: 2px; color: #111; white-space: nowrap; font: 11px/13px "Noto Sans", sans-serif; letter-spacing: -.35px; }

.panel { position: absolute; left: 4px; width: 300px; height: 25px; background: #f1f1f1; border: 1px solid #c8c8c8; display: flex; align-items: center; color: #666; padding-right: 1px; }
.browser { top: 4px; padding: 0 1px 1px 4px; }
.browser span { margin-left: 9px; letter-spacing: -.55px; }
.comments { top: 784px; border-top: 0; padding-left: 24px; }
.comments span { letter-spacing: -.85px; }
.pm { margin-left: auto; margin-right: 7px; }
.grip { width: 3px; height: 11px; border-left: 1px solid #777; border-right: 1px solid #777; }
.tree { position: absolute; left: 0; top: 32px; }
.row { height: 24px; display: flex; align-items: center; padding-left: 40px; }
.r0 { padding-left: 21px; }
.row .chip { margin-left: 8px; padding-left: 3px; height: 20px; background: #f1f1f1; display: flex; align-items: center; }
.r0 .chip { margin-left: 7px; width: 148px; }
.chip > span { margin-left: 14px; white-space: nowrap; letter-spacing: -.1px; }
.f2 { margin-left: 9px; }
.w1 { width: 134px; }
.w2 { width: 110px; }
.w3 { width: 95px; }
.w4 { width: 115px; }
.unsaved { display: flex; align-items: center; gap: 13px; background: #999; color: #fff; width: 98px; height: 16px; margin: 0 3px 0 6px; padding-left: 3px; letter-spacing: .2px; }

.palette { position: absolute; left: 1666px; top: 124px; width: 250px; height: 513px; background: #f1f1f1; border: 1px solid #c8c8c8; }
.phead { height: 24px; border-bottom: 1px solid #c8c8c8; display: flex; align-items: center; padding: 0 0 1px 1px; color: #666; }
.phead svg { margin-left: 7px; }
.phead span { margin-left: 4px; letter-spacing: -.65px; }
.phead .ff { margin-left: auto; margin-right: 4px; }
.prow { height: 30px; display: flex; align-items: center; padding-left: 12px; }
.prow.sec { padding-left: 4px; gap: 4px; font-weight: bold; font-size: 11.5px; letter-spacing: -.05px; }
.prow label { width: 127px; white-space: nowrap; letter-spacing: -.04px; }
.opts { display: flex; gap: 13px; align-items: center; }
.opts svg { width: 16px; height: 16px; }
.sel { width: 24px; height: 28px; background: #0696d7; border: 1px solid #7cc4ea; margin: 0 -4px; display: grid; place-items: center; }
.cb { width: 14px; height: 14px; margin-left: 1px; border: 1.5px solid #444; border-radius: 3px; background: linear-gradient(#eee, #bbb); position: relative; }
.cb.on { background: linear-gradient(#b0b0b0, #eee); }
.cb.on::after { content: ""; position: absolute; left: 4px; top: 0; width: 5px; height: 9px; border: solid #111; border-width: 0 1.8px 1.8px 0; transform: rotate(38deg); }
.pfoot { border-top: 1px solid #c8c8c8; margin-top: 1px; height: 36px; padding: 8px 10px 0; display: flex; justify-content: flex-end; }
.pfoot button { width: 83px; height: 20px; border: 1px solid #adadad; background: #ebebeb; padding: 1px 0 0; font: 12px "Liberation Sans", Arial, sans-serif; color: #666; letter-spacing: .1px; }

.navbar { position: absolute; left: 841px; top: 785px; width: 237px; height: 24px; background: #f1f1f1; display: flex; align-items: center; padding-left: 3px; }
.n { width: 16px; height: 16px; }
.c1 { margin-left: 5px; }
.n2 { margin-left: 5px; }
.n3 { margin-left: 10px; }
.n4 { margin-left: 9px; }
.n5 { margin-left: 11px; }
.c2 { margin-left: 5px; }
.n6 { margin-left: 5px; }
.c3 { margin-left: 1px; }
.n7 { margin-left: 7px; }
.c4 { margin-left: 2px; }
.n8 { margin-left: 5px; }
.c5 { margin-left: 2px; }

.timeline { height: 50px; flex: none; background: #f1f1f1; border-top: 2px solid #ccc; display: flex; align-items: center; padding-left: 11px; }
.feature { margin: 1px 0 0 23px; }
.tgear { margin-left: auto; margin-right: 13px; }

.taskbar { height: 48px; flex: none; background: #202020; display: flex; justify-content: space-between; color: #fff; }
.apps { display: flex; padding-left: 10.5px; }
.apps span { width: 44px; height: 48px; display: flex; flex-direction: column; align-items: center; padding-top: 12px; }
.apps svg { width: 24px; height: 24px; }
.apps .run::after { content: ""; width: 6px; height: 3px; border-radius: 2px; background: #999; margin-top: 4px; }
.tray { display: flex; align-items: center; padding-right: 20px; font: 12px "Open Sans", sans-serif; }
.tray svg { width: 16px; height: 16px; margin-right: 16px; }
.idbox { width: 16px; height: 16px; background: #109010; border: 1px solid #eee; font: bold 12px/14px "Liberation Mono", monospace; text-align: center; margin-right: 16px; letter-spacing: -1px; }
.tray .kb { margin: 0 24px 0 5px; }
.lang { width: 20px; font-size: 11px; letter-spacing: -.4px; }
.tray .wifi { margin: 0 7px 0 19px; }
.tray .spk { margin-right: 9px; }
.tray .bat { margin-right: 13px; }
.clock { display: flex; flex-direction: column; align-items: flex-end; line-height: 16px; width: 58px; letter-spacing: -.5px; }
.tray .moon { margin: 0 0 0 8px; }
```
FILE: grid.js
```js
// Sketch grid: a line every 5 mm, a heavier one every 25 mm
const grid = document.getElementById('grid');
const step = 22.92;
let minor = '', major = '';
for (let i = -42; i <= 42; i++) {
  const x = Math.round(960 + i * step - 0.5) + 0.5;
  const y = Math.round(575.5 + i * step - 0.5) + 0.5;
  const d = `M${x} 169v813M0 ${y}h1920`;
  if (i % 5 === 0) major += d; else minor += d;
}
grid.innerHTML = `<path d="${minor}" stroke="#ededed" stroke-width="1.3"/><path d="${major}" stroke="#dadada" stroke-width="1.3"/>`;
```
